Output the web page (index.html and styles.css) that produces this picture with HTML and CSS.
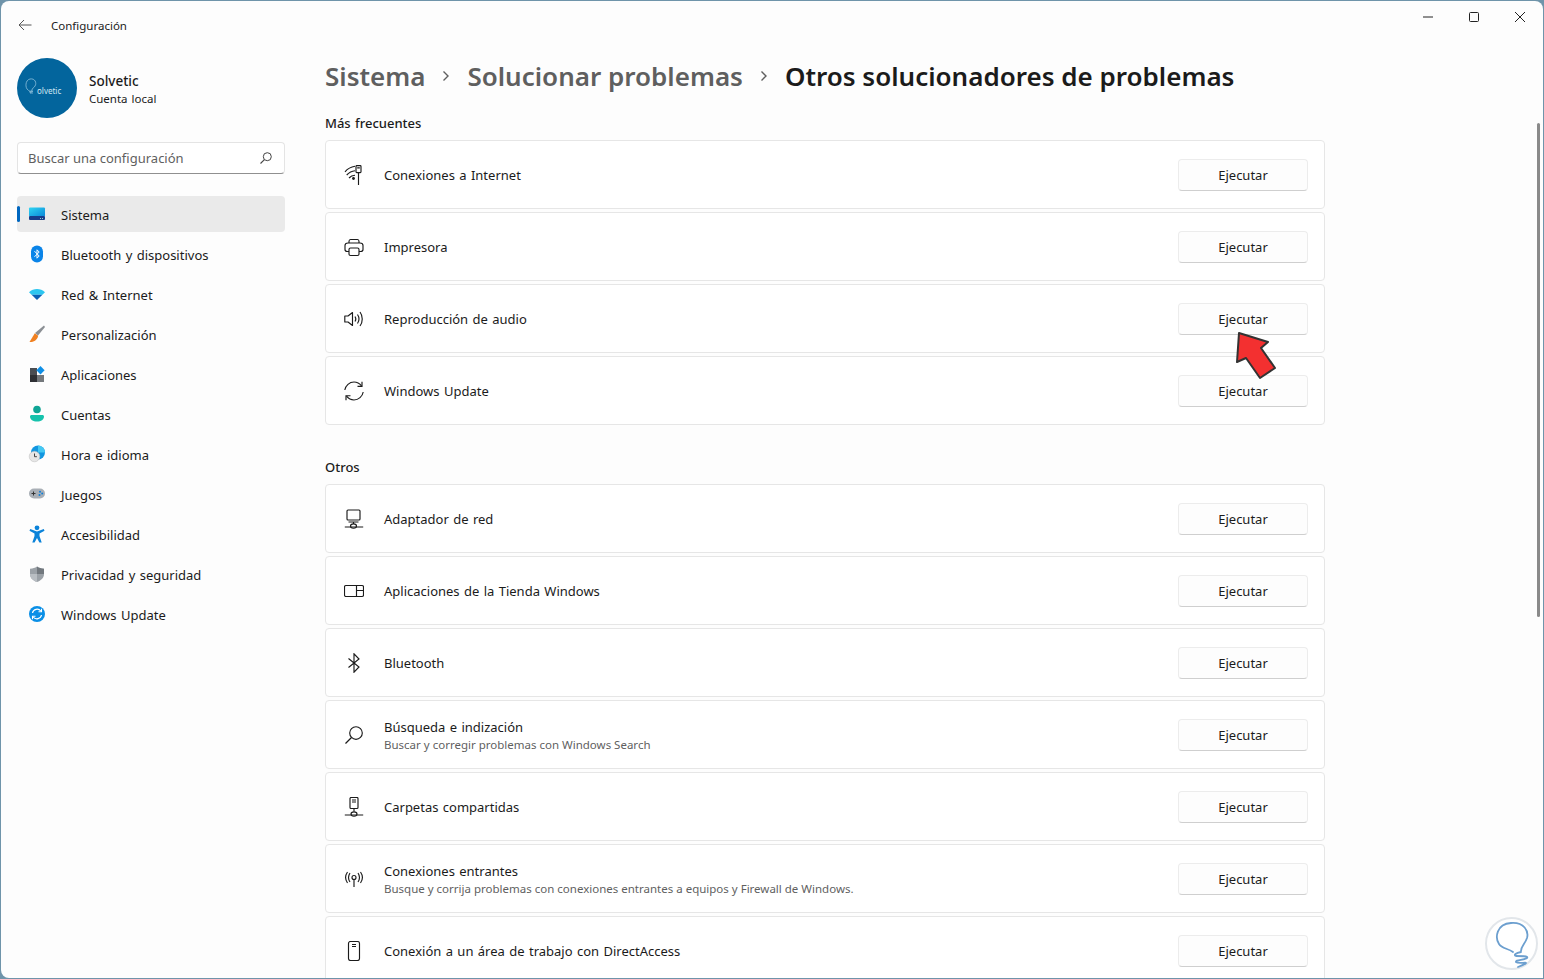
FILE: index.html
```html
<!DOCTYPE html>
<html lang="es">
<head>
    <meta charset="utf-8">
    <title>Configuración</title>
    <link rel="stylesheet" href="styles.css">
</head>
<body>
<div class="window">
    <aside class="sidebar">
        <div class="app-title">
            <svg class="back" width="16" height="16" viewBox="0 0 16 16"><path d="M14.5 8H2M7 3 2 8l5 5" fill="none" stroke="#555" stroke-width="1"/></svg>
            <span>Configuración</span>
        </div>
        <div class="user">
            <div class="avatar">
                <svg class="avatar-bulb" width="14" height="20" viewBox="0 0 14 20"><path d="M4 14C1 12 1 4 6 3c5-1 7 4 5 7-1 2-3 2-3 4-1 2-3 1-4 0zM5 16l4-1-3 2 3 0" fill="none" stroke="#8fc0dc" stroke-width=".8"/></svg>
                <span>olvetic</span>
            </div>
            <div>
                <div class="user-name">Solvetic</div>
                <div class="user-type">Cuenta local</div>
            </div>
        </div>
        <div class="search">
            <span>Buscar una configuración</span>
            <svg width="14" height="14" viewBox="0 0 14 14"><circle cx="8.3" cy="5.7" r="4" fill="none" stroke="#444" stroke-width="1"/><path d="M5.4 8.6 1.5 12.5" stroke="#444" stroke-width="1.1"/></svg>
        </div>
        <nav class="nav">
            <div class="nav-item active">
                <svg width="20" height="20" viewBox="0 0 20 20"><defs><linearGradient id="sys" x1="0" y1="0" x2="1" y2="1"><stop offset="0" stop-color="#2fd5f2"/><stop offset="1" stop-color="#0a86d8"/></linearGradient></defs><rect x="2" y="3.5" width="16" height="9" rx="1" fill="url(#sys)"/><rect x="2" y="12" width="16" height="4" rx="1" fill="#173d8c"/><rect x="13" y="14" width="1" height="1" fill="#9cc"/><rect x="15" y="14" width="1" height="1" fill="#9cc"/></svg>
                <span>Sistema</span>
            </div>
            <div class="nav-item">
                <svg width="20" height="20" viewBox="0 0 20 20"><rect x="4" y="1.500" width="12" height="17" rx="6" fill="#0a84e8"/><path d="M7.500 7.200 12.200 12 10 14.200V5.800L12.200 8 7.500 12.800" fill="none" stroke="#fff" stroke-width="1"/></svg>
                <span>Bluetooth y dispositivos</span>
            </div>
            <div class="nav-item">
                <svg width="20" height="20" viewBox="0 0 20 20"><path d="M2 8.200C6.500 3.800 13.500 3.800 18 8.200l-2.600 2.600H4.600z" fill="#2cc6f0"/><path d="M4.600 10.800h10.800L10 16z" fill="#0a5fb4"/></svg>
                <span>Red &amp; Internet</span>
            </div>
            <div class="nav-item">
                <svg width="20" height="20" viewBox="0 0 20 20"><path d="M17 1.500 18 3 11 11.500 8 9z" fill="#8b8f94"/><path d="M7.800 9.200 2.500 18c3.500.2 7.500-1 8.700-6.200z" fill="#f08020"/></svg>
                <span>Personalización</span>
            </div>
            <div class="nav-item">
                <svg width="20" height="20" viewBox="0 0 20 20"><rect x="3" y="4" width="7" height="7" fill="#4a4d52"/><rect x="3" y="11" width="7" height="7" fill="#2e3034"/><rect x="10" y="11" width="7" height="7" fill="#74787c"/><path d="M13.500 2 17.600 6.200 13.500 10.400 9.400 6.200z" fill="#0f8fe6"/></svg>
                <span>Aplicaciones</span>
            </div>
            <div class="nav-item">
                <svg width="20" height="20" viewBox="0 0 20 20"><circle cx="10" cy="5.500" r="3.800" fill="#10a596"/><path d="M3 12.500c0-1 .8-1.500 1.700-1.500h10.600c.9 0 1.700.5 1.700 1.500 0 3-3 5-7 5s-7-2-7-5z" fill="#16c2ac"/></svg>
                <span>Cuentas</span>
            </div>
            <div class="nav-item">
                <svg width="20" height="20" viewBox="0 0 20 20"><circle cx="11" cy="8.500" r="7" fill="#1296e0"/><path d="M11 1.500a7 7 0 0 1 7 7h-7z" fill="#45c8f2"/><circle cx="7.500" cy="12.500" r="5.300" fill="#e6e6e6" stroke="#bbb" stroke-width=".5"/><path d="M7.500 9.500v3.200h2.400" fill="none" stroke="#444" stroke-width="1"/></svg>
                <span>Hora e idioma</span>
            </div>
            <div class="nav-item">
                <svg width="20" height="20" viewBox="0 0 20 20"><rect x="2" y="4.500" width="16" height="10" rx="5" fill="#a9afb6"/><path d="M4.500 9.500h4M6.500 7.500v4" stroke="#333" stroke-width="1"/><circle cx="13" cy="7.800" r="1" fill="#0f7fd8"/><circle cx="15.200" cy="9.500" r="1" fill="#0f7fd8"/><circle cx="12.500" cy="11" r="1" fill="#0f7fd8"/></svg>
                <span>Juegos</span>
            </div>
            <div class="nav-item">
                <svg width="20" height="20" viewBox="0 0 20 20"><circle cx="10" cy="3.800" r="2.400" fill="#0b83d9"/><path d="M3.200 5 10 7.500 16.800 5l.7 1.800-5 2.700V12l2.200 6.500h-2.300L10 14l-2.400 4.500H5.300L7.500 12V9.500l-5-2.700z" fill="#0b83d9"/></svg>
                <span>Accesibilidad</span>
            </div>
            <div class="nav-item">
                <svg width="20" height="20" viewBox="0 0 20 20"><path d="M10 2.500c2 1.500 4 2 7 2.200V10c0 4-3 6.500-7 8-4-1.500-7-4-7-8V4.700c3-.2 5-.7 7-2.200z" fill="#9ba1a7"/><path d="M10 2.500c2 1.500 4 2 7 2.200V10H10z" fill="#72787e"/><path d="M3 10h7v8c-4-1.500-7-4-7-8z" fill="#b9bec3"/></svg>
                <span>Privacidad y seguridad</span>
            </div>
            <div class="nav-item">
                <svg width="20" height="20" viewBox="0 0 20 20"><circle cx="10" cy="10" r="8" fill="#0a8fe6"/><path d="M5.500 9A4.700 4.700 0 0 1 13.800 7M14.500 11A4.700 4.700 0 0 1 6.200 13" fill="none" stroke="#fff" stroke-width="1.200"/><path d="M14.500 4.800v3h-3M5.500 15.200v-3h3" fill="none" stroke="#fff" stroke-width="1.100"/></svg>
                <span>Windows Update</span>
            </div>
        </nav>
    </aside>

    <main class="main">
        <div class="win-controls">
            <span class="win-btn"><svg width="12" height="12" viewBox="0 0 12 12"><path d="M1 6h10" stroke="#222" stroke-width="1"/></svg></span>
            <span class="win-btn"><svg width="12" height="12" viewBox="0 0 12 12"><rect x="1.500" y="1.500" width="9" height="9" rx="1" fill="none" stroke="#222" stroke-width="1"/></svg></span>
            <span class="win-btn"><svg width="12" height="12" viewBox="0 0 12 12"><path d="M1 1l10 10M11 1 1 11" stroke="#222" stroke-width="1"/></svg></span>
        </div>
        <div class="content">
            <h1 class="crumbs">
                <span class="crumb">Sistema</span>
                <svg class="sep" width="10" height="12" viewBox="0 0 10 12"><path d="M2.500 1.500 7 6l-4.500 4.500" fill="none" stroke="#5f5f5f" stroke-width="1.400"/></svg>
                <span class="crumb">Solucionar problemas</span>
                <svg class="sep" width="10" height="12" viewBox="0 0 10 12"><path d="M2.500 1.500 7 6l-4.500 4.500" fill="none" stroke="#5f5f5f" stroke-width="1.400"/></svg>
                <span>Otros solucionadores de problemas</span>
            </h1>

            <h2 class="section">Más frecuentes</h2>
            <div class="card">
                <svg width="20" height="20" viewBox="0 0 20 20" class="ic"><path d="M1 6.800C3.500 3.800 7 1.800 11 1.200M2.700 10C5 7.500 8 6 11 5.700M5 13C6.500 11.300 8.500 10.300 11 10.200" fill="none"/><circle cx="9.500" cy="13.500" r="1.400" fill="#1b1b1b" stroke="none"/><rect x="12" y=".6" width="5" height="7" rx=".8" fill="none"/><path d="M13.200 2.800h2.600M14.500 7.600V20" fill="none"/></svg>
                <div class="label">Conexiones a Internet</div>
                <button class="run">Ejecutar</button>
            </div>
            <div class="card">
                <svg width="20" height="20" viewBox="0 0 20 20" class="ic"><path d="M5 6V4.500C5 3.500 5.800 2.500 6.500 2.500h7c.8 0 1.500 1 1.500 2V6M5 14.500H3.500C2.500 14.500 1 14 1 12.500v-4C1 7 2.500 6 4 6h12c1.500 0 3 1 3 2.500v4c0 1.500-1.500 2-2.500 2H15" fill="none"/><rect x="5" y="11" width="10" height="7.500" rx="1.500" fill="none"/></svg>
                <div class="label">Impresora</div>
                <button class="run">Ejecutar</button>
            </div>
            <div class="card">
                <svg width="20" height="20" viewBox="0 0 20 20" class="ic"><path d="M.8 7h3.200L8.500 3.500v13L4 13H.8z" fill="none" stroke-linejoin="round"/><path d="M11 7.500c1 1.500 1 3.500 0 5M13.500 5.500c1.800 2.700 1.800 6.300 0 9M16 3c3 4 3 10 0 14" fill="none"/></svg>
                <div class="label">Reproducción de audio</div>
                <button class="run">Ejecutar</button>
            </div>
            <div class="card">
                <svg width="20" height="20" viewBox="0 0 20 20" class="ic"><path d="M.8 9C1.500 4.500 5.500 1 10 1c3 0 5.500 1.300 7.500 3.800M19.200 11c-.7 4.500-4.700 8-9.200 8-3 0-5.500-1.300-7.500-3.800" fill="none"/><path d="M18 .8v4.500h-4.500M2 19.200v-4.500h4.500" fill="none"/></svg>
                <div class="label">Windows Update</div>
                <button class="run">Ejecutar</button>
            </div>

            <h2 class="section section-gap">Otros</h2>
            <div class="card">
                <svg width="20" height="20" viewBox="0 0 20 20" class="ic"><rect x="3" y="1" width="13" height="10" rx="1" fill="none"/><path d="M4.500 13h10M.8 18h18.400M9.500 13v2" fill="none"/><ellipse cx="9.500" cy="17" rx="3" ry="2.200" fill="none"/></svg>
                <div class="label">Adaptador de red</div>
                <button class="run">Ejecutar</button>
            </div>
            <div class="card">
                <svg width="20" height="20" viewBox="0 0 20 20" class="ic"><rect x=".5" y="4.500" width="19" height="11" rx="1.500" fill="none"/><path d="M12.500 4.500v11M12.500 9.500h7" fill="none"/></svg>
                <div class="label">Aplicaciones de la Tienda Windows</div>
                <button class="run">Ejecutar</button>
            </div>
            <div class="card">
                <svg width="20" height="20" viewBox="0 0 20 20" class="ic"><path d="M4.500 5.500 15 14l-5 5.200V.8L15 6 4.500 14.500" fill="none"/></svg>
                <div class="label">Bluetooth</div>
                <button class="run">Ejecutar</button>
            </div>
            <div class="card">
                <svg width="20" height="20" viewBox="0 0 20 20" class="ic"><circle cx="12" cy="8" r="6.300" fill="none"/><path d="M7.500 12.500 1.500 18.500" fill="none"/></svg>
                <div class="label">Búsqueda e indización<small>Buscar y corregir problemas con Windows Search</small></div>
                <button class="run">Ejecutar</button>
            </div>
            <div class="card">
                <svg width="20" height="20" viewBox="0 0 20 20" class="ic"><rect x="6" y=".5" width="8" height="11" rx="1" fill="none"/><path d="M8 3h4M8 5h4M10 11.500v3M.8 18h18.400" fill="none"/><ellipse cx="10" cy="17" rx="3" ry="2.200" fill="none"/></svg>
                <div class="label">Carpetas compartidas</div>
                <button class="run">Ejecutar</button>
            </div>
            <div class="card">
                <svg width="20" height="20" viewBox="0 0 20 20" class="ic"><circle cx="10" cy="8.500" r="2" fill="none"/><path d="M10 10.500V18M6 4c-2 3-2 6 0 9M14 4c2 3 2 6 0 9M3.500 3c-2.800 4-2.800 7 0 11M16.500 3c2.800 4 2.800 7 0 11" fill="none"/></svg>
                <div class="label">Conexiones entrantes<small>Busque y corrija problemas con conexiones entrantes a equipos y Firewall de Windows.</small></div>
                <button class="run">Ejecutar</button>
            </div>
            <div class="card">
                <svg width="20" height="20" viewBox="0 0 20 20" class="ic"><rect x="4.500" y=".5" width="11" height="19" rx="2" fill="none"/><path d="M8 3.500h4M8 5.500h4" fill="none"/></svg>
                <div class="label">Conexión a un área de trabajo con DirectAccess</div>
                <button class="run">Ejecutar</button>
            </div>
        </div>
        <div class="scrollbar"></div>
    </main>

    <!-- red pointer over the third button -->
    <svg class="pointer" width="44" height="50" viewBox="0 0 44 50"><path d="M5 3 34 12 27 18 41 38 26 48 12 28 3 32z" fill="#f33030" stroke="#333" stroke-width="2" stroke-linejoin="round"/></svg>

    <div class="watermark">
        <svg width="36" height="48" viewBox="0 0 36 48"><path d="M19 32C14 28 8 29 5 24 1 18 2 4 17 3 30 2 35 11 33 18 31 24 27 26 27 31M27 32C22 33 19 35 22 36 27 36 35 36 33 38 30 40 21 40 22 42 24 44 32 42 32 43 30 45 27 46 24 47" fill="none" stroke="#6c9fcf" stroke-width="1.800" stroke-linecap="round"/></svg>
    </div>
</div>
</body>
</html>
```

FILE: styles.css
```css
html, body {
    margin: 0;
    height: 100%;
    overflow: hidden;
}
body {
    background: #6f94aa;
    font-family: "Noto Sans", "Open Sans", sans-serif;
    font-size: 13px;
    word-spacing: 1px;
    color: #1b1b1b;
    padding: 1px 0 1px 1px;
    box-sizing: border-box;
}
.window {
    display: flex;
    height: 100%;
    background: #fdfdfd;
    border-radius: 8px 8px 0 8px;
    position: relative;
    overflow: hidden;
    width: 1542px;
}

/* sidebar */
.sidebar {
    width: 300px;
    flex: none;
    padding: 0 16px;
    box-sizing: border-box;
}
.app-title {
    display: flex;
    align-items: center;
    height: 48px;
    font-size: 11.5px;
    color: #222;
}
.back {
    margin: 0 18px 0 0;
}
.user {
    display: flex;
    align-items: center;
    gap: 12px;
    margin-top: 9px;
}
.avatar {
    width: 60px;
    height: 60px;
    border-radius: 50%;
    background: #03659d;
    color: #cfe6f2;
    display: flex;
    align-items: center;
    padding: 4px 0 0 7px;
    box-sizing: border-box;
    font-size: 8px;
}
.avatar-bulb {
    flex: none;
    margin-right: -1px;
    margin-top: -8px;
}
.user-name {
    font-size: 13.5px;
    font-weight: 500;
    line-height: 18px;
    padding-top: 2px;
}
.user-type {
    font-size: 11.5px;
    line-height: 17px;
}
.search {
    display: flex;
    justify-content: space-between;
    align-items: center;
    height: 32px;
    margin-top: 24px;
    padding: 0 11px 0 10px;
    box-sizing: border-box;
    border: 1px solid #e4e4e4;
    border-bottom-color: #8f8f8f;
    border-radius: 4px;
    background: #fff;
    color: #5f5f5f;
    word-spacing: 0;
}
.nav {
    margin-top: 22px;
    display: flex;
    flex-direction: column;
    gap: 4px;
}
.nav-item {
    display: flex;
    align-items: center;
    gap: 14px;
    height: 36px;
    padding-left: 10px;
    border-radius: 4px;
    position: relative;
}
.nav-item span {
    padding-top: 2px;
}
.nav-item.active {
    background: #eaeaea;
}
.nav-item.active::before {
    content: "";
    position: absolute;
    left: 0;
    top: 10px;
    width: 3px;
    height: 16px;
    background: #0067c0;
    border-radius: 2px;
}

/* main pane */
.main {
    flex: 1;
    min-width: 0;
    position: relative;
}
.win-controls {
    display: flex;
    justify-content: flex-end;
    height: 32px;
}
.win-btn {
    width: 46px;
    display: flex;
    align-items: center;
    justify-content: center;
}
.content {
    width: 1000px;
    margin-left: 24px;
}
.crumbs {
    display: flex;
    align-items: center;
    margin: 20px 0 0;
    height: 46px;
    font-size: 26px;
    font-weight: 600;
    word-spacing: 0;
    color: #1b1b1b;
    white-space: nowrap;
}
.crumb {
    color: #5f5f5f;
}
.sep {
    margin: 0 16px;
}
.section {
    font-size: 13px;
    font-weight: 500;
    margin: 0;
    line-height: 20px;
    padding-top: 14px;
    padding-bottom: 7px;
}
.section-gap {
    padding-top: 29px;
}
.card {
    display: flex;
    align-items: center;
    height: 69px;
    box-sizing: border-box;
    margin-bottom: 3px;
    padding: 0 16px 0 18px;
    background: #fff;
    border: 1px solid #e6e6e6;
    border-radius: 4px;
}
.ic {
    flex: none;
    margin-right: 20px;
    stroke: #1b1b1b;
    stroke-width: 1.15;
}
.label {
    flex: 1;
    line-height: 18px;
}
.label small {
    display: block;
    font-size: 11.5px;
    word-spacing: 0;
    color: #5f5f5f;
    line-height: 16px;
    margin: 1px 0 -1px;
}
.run {
    width: 130px;
    height: 32px;
    font: inherit;
    word-spacing: 0;
    color: #1b1b1b;
    background: #fdfdfd;
    border: 1px solid #ececec;
    border-bottom-color: #cfcfcf;
    border-radius: 4px;
    padding: 0;
}
.scrollbar {
    position: absolute;
    right: 3px;
    top: 122px;
    width: 3px;
    height: 494px;
    background: #8a8a8a;
    border-radius: 2px;
}

/* overlays */
.pointer {
    position: absolute;
    left: 1233px;
    top: 329px;
}
.watermark {
    position: absolute;
    left: 1484px;
    top: 916px;
    width: 53px;
    height: 53px;
    box-sizing: border-box;
    border: 2px solid #e2e6ea;
    border-radius: 50%;
    background: #fff;
    display: flex;
    align-items: center;
    justify-content: center;
}
```
